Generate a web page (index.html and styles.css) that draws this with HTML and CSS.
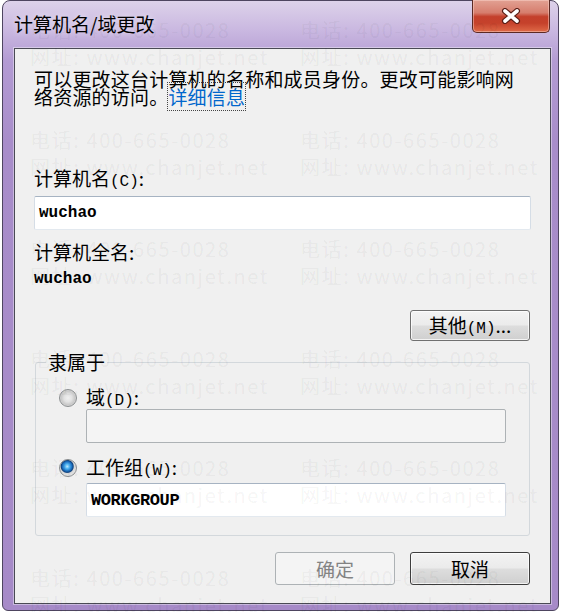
FILE: index.html
```html
<!DOCTYPE html>
<html lang="zh-CN">
<head>
    <meta charset="UTF-8">
    <meta name="viewport" content="width=device-width, initial-scale=1.0">
    <title>计算机名/域更改</title>
    <link rel="stylesheet" href="styles.css">
</head>
<body>
    <div class="window">
        <div class="titlebar">
            <div class="title">计算机名/域更改</div>
            <div class="close-btn">
                <svg width="22" height="16" viewBox="0 0 22 16">
                    <path d="M5 3 L17 13 M17 3 L5 13" stroke="#5a1e16" stroke-width="6" stroke-linecap="round"/>
                    <path d="M5 3 L17 13 M17 3 L5 13" stroke="#ffffff" stroke-width="3.6" stroke-linecap="round"/>
                </svg>
            </div>
        </div>

        <div class="content">
            <p class="intro">可以更改这台计算机的名称和成员身份。更改可能影响网<br>络资源的访问。<a class="more-link" href="#">详细信息</a></p>

            <div class="label label-name">计算机名<span class="key">(C)</span>:</div>
            <div class="textbox"><span class="mono">wuchao</span></div>

            <div class="label label-full">计算机全名:</div>
            <div class="full-value mono">wuchao</div>

            <div class="other-row">
                <button class="btn">其他<span class="key">(M)</span>...</button>
            </div>

            <fieldset class="member">
                <legend>隶属于</legend>
                <div class="member-body">
                    <div class="radio-row radio-row-first">
                        <span class="radio"></span>
                        <span>域<span class="key">(D)</span>:</span>
                    </div>
                    <div class="textbox textbox-indent textbox-disabled"></div>

                    <div class="radio-row radio-row-second">
                        <span class="radio radio-on"></span>
                        <span>工作组<span class="key">(W)</span>:</span>
                    </div>
                    <div class="textbox textbox-indent textbox-group"><span class="mono caps">WORKGROUP</span></div>
                </div>
            </fieldset>

            <div class="actions">
                <button class="btn btn-disabled">确定</button>
                <button class="btn btn-default">取消</button>
            </div>
        </div>
    </div>

    <div class="watermark">
        <div class="wm"><div>电话: 400-665-0028</div><div>网址: www.chanjet.net</div></div>
        <div class="wm"><div>电话: 400-665-0028</div><div>网址: www.chanjet.net</div></div>
        <div class="wm"><div>电话: 400-665-0028</div><div>网址: www.chanjet.net</div></div>
        <div class="wm"><div>电话: 400-665-0028</div><div>网址: www.chanjet.net</div></div>
        <div class="wm"><div>电话: 400-665-0028</div><div>网址: www.chanjet.net</div></div>
        <div class="wm"><div>电话: 400-665-0028</div><div>网址: www.chanjet.net</div></div>
        <div class="wm"><div>电话: 400-665-0028</div><div>网址: www.chanjet.net</div></div>
        <div class="wm"><div>电话: 400-665-0028</div><div>网址: www.chanjet.net</div></div>
        <div class="wm"><div>电话: 400-665-0028</div><div>网址: www.chanjet.net</div></div>
        <div class="wm"><div>电话: 400-665-0028</div><div>网址: www.chanjet.net</div></div>
        <div class="wm"><div>电话: 400-665-0028</div><div>网址: www.chanjet.net</div></div>
        <div class="wm"><div>电话: 400-665-0028</div><div>网址: www.chanjet.net</div></div>
    </div>
</body>
</html>
```

FILE: styles.css
```css
* {
    margin: 0;
    padding: 0;
    box-sizing: border-box;
}

body {
    position: relative;
    width: 561px;
    height: 612px;
    overflow: hidden;
    background: #ffffff;
    font-family: "Noto Sans CJK SC", sans-serif;
    color: #000;
}

/* window frame */
.window {
    margin: 0 2px;
    width: 557px;
    height: 611px;
    border: 1px solid #4e4560;
    border-radius: 8px 8px 6px 6px;
    background: linear-gradient(180deg, #ddd2ea 0px, #c9b7e0 30px, #b39bd3 60px, #a88dca 140px, #a68ac8 100%);
    display: flex;
    flex-direction: column;
}

.titlebar {
    height: 47px;
    display: flex;
    justify-content: space-between;
    align-items: flex-start;
}

.title {
    padding: 12px 0 0 11px;
    font-size: 19px;
    line-height: 22px;
    color: #000;
    text-shadow: 0 0 6px rgba(255, 255, 255, 0.7);
}

.close-btn {
    width: 78px;
    height: 33px;
    margin: -1px 8px 0 0;
    border: 1px solid #5c2a24;
    border-top: none;
    border-radius: 0 0 5px 5px;
    background: linear-gradient(180deg, #e2a193 0%, #d67d6d 40%, #c4402c 52%, #c5412b 72%, #df6a48 100%);
    box-shadow: inset 0 0 0 1px rgba(255, 220, 210, 0.45);
    display: flex;
    align-items: center;
    justify-content: center;
}

/* client area */
.content {
    flex: 1;
    margin: 0 7px 6px 11px;
    border: 1px solid #4a4a55;
    box-shadow: 0 0 0 1px rgba(255, 255, 255, 0.4);
    background: #f0f0f0;
    padding: 0 19px 0 19px;
}

.intro {
    margin-top: 21px;
    font-size: 19px;
    line-height: 18px;
    letter-spacing: 0.2px;
}

.more-link {
    color: #0066cc;
    text-decoration: none;
    outline: 1px dotted #444;
}

.label {
    font-size: 19px;
    line-height: 22px;
}

.label-name { margin-top: 61px; }
.label-full { margin-top: 11px; }

.key {
    font-family: "Liberation Mono", monospace;
    font-size: 16px;
    line-height: 1;
}

.mono {
    font-family: "Liberation Mono", monospace;
    font-size: 16px;
    font-weight: bold;
}

.caps {
    font-size: 17px;
    letter-spacing: -0.4px;
}

.textbox {
    margin-top: 6px;
    height: 34px;
    border: 1px solid;
    border-color: #a6b3c2 #d5dde6 #e3e9ef #d5dde6;
    border-radius: 2px;
    background: #fff;
    display: flex;
    align-items: center;
    padding-left: 4px;
}

.full-value {
    margin-top: 6px;
    line-height: 20px;
}

.other-row {
    margin-top: 21px;
    display: flex;
    justify-content: flex-end;
    padding-right: 1px;
}

.btn {
    width: 120px;
    height: 31px;
    font-family: "Noto Sans CJK SC", sans-serif;
    font-size: 19px;
    line-height: 1;
    color: #000;
    border: 1px solid #707070;
    border-radius: 3px;
    background: linear-gradient(180deg, #f3f3f3 0%, #ebebeb 48%, #dddddd 52%, #cfcfcf 100%);
    box-shadow: inset 0 0 0 1px rgba(255, 255, 255, 0.75);
}

/* group box */
.member {
    margin: 10px 1px 0 1px;
    border: 1px solid #d3d8dc;
    border-radius: 3px;
    padding: 0 10px 18px 10px;
}

.member legend {
    padding: 0 2px;
    font-size: 19px;
    line-height: 22px;
}

.member-body {
    padding: 0 13px;
}

.radio-row {
    display: flex;
    align-items: center;
    gap: 9px;
    font-size: 19px;
    line-height: 22px;
}

.radio-row-first { margin-top: 13px; }
.radio-row-second { margin-top: 13px; }

.radio {
    width: 18px;
    height: 18px;
    border-radius: 50%;
    border: 1px solid #8c8f91;
    background: radial-gradient(circle at 50% 50%, #f0f0f0 0, #e2e2e2 35%, #c9c9c9 60%, #dedede 80%, #f6f6f6 100%);
}

.radio-on {
    background: radial-gradient(circle at 45% 40%, #c6ecff 0, #4db3f2 18%, #1c6fc0 36%, #0f437f 46%, #d8d8d8 54%, #e8e8e8 80%, #f6f6f6 100%);
}

.textbox-indent {
    margin-left: 27px;
    margin-top: 0;
}

.textbox-disabled {
    background: #f4f4f4;
    border-color: #adb2b5;
}

.textbox-group {
    margin-top: 4px;
}

.actions {
    margin-top: 16px;
    display: flex;
    justify-content: flex-end;
    gap: 15px;
    padding-right: 1px;
}

.actions .btn {
    height: 33px;
}

.btn-disabled {
    color: #838383;
    border-color: #adb2b5;
    background: #f4f4f4;
    box-shadow: none;
}

.btn-default {
    border-color: #3e3e3e;
}

/* watermark overlay */
.watermark {
    position: absolute;
    left: 0;
    top: 0;
    width: 561px;
    height: 612px;
    overflow: hidden;
    pointer-events: none;
    padding: 16px 0 0 30px;
    display: grid;
    grid-template-columns: 270px 270px;
    grid-auto-rows: 109.6px;
    color: rgba(0, 0, 0, 0.055);
    font-size: 20px;
    line-height: 27px;
    letter-spacing: 1.6px;
    white-space: nowrap;
}
```
